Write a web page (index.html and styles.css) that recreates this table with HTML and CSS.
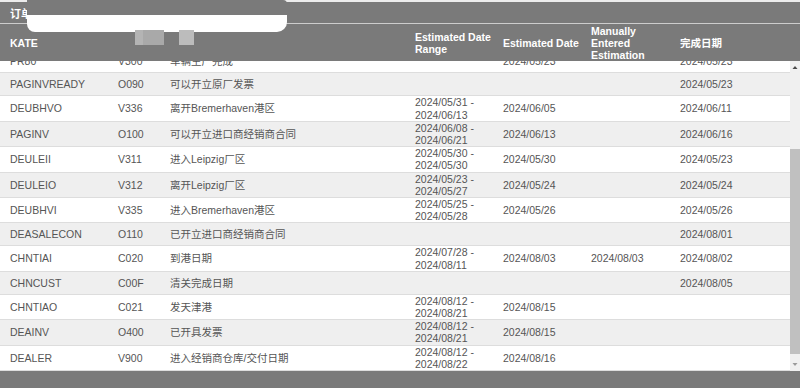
FILE: index.html
```html
<!DOCTYPE html>
<html lang="zh">
<head>
<meta charset="utf-8">
<title>订单状态</title>
<link rel="stylesheet" href="styles.css">
</head>
<body>
<div class="panel">
  <div class="topline"></div>
  <div class="titlebar"><span class="title">订单</span></div>
  <div class="grid head">
    <div>KATE</div>
    <div></div>
    <div></div>
    <div>Estimated Date Range</div>
    <div>Estimated Date</div>
    <div>Manually Entered Estimation</div>
    <div>完成日期</div>
  </div>
  <div class="body">
    <div class="scroller">
      <div class="rows">
        <div class="grid row"><div>PR80</div><div>V300</div><div>车辆生产完成</div><div></div><div>2024/05/23</div><div></div><div>2024/05/23</div></div>
        <div class="grid row"><div>PAGINVREADY</div><div>O090</div><div>可以开立原厂发票</div><div></div><div></div><div></div><div>2024/05/23</div></div>
        <div class="grid row"><div>DEUBHVO</div><div>V336</div><div>离开Bremerhaven港区</div><div>2024/05/31 - 2024/06/13</div><div>2024/06/05</div><div></div><div>2024/06/11</div></div>
        <div class="grid row"><div>PAGINV</div><div>O100</div><div>可以开立进口商经销商合同</div><div>2024/06/08 - 2024/06/21</div><div>2024/06/13</div><div></div><div>2024/06/16</div></div>
        <div class="grid row"><div>DEULEII</div><div>V311</div><div>进入Leipzig厂区</div><div>2024/05/30 - 2024/05/30</div><div>2024/05/30</div><div></div><div>2024/05/23</div></div>
        <div class="grid row"><div>DEULEIO</div><div>V312</div><div>离开Leipzig厂区</div><div>2024/05/23 - 2024/05/27</div><div>2024/05/24</div><div></div><div>2024/05/24</div></div>
        <div class="grid row"><div>DEUBHVI</div><div>V335</div><div>进入Bremerhaven港区</div><div>2024/05/25 - 2024/05/28</div><div>2024/05/26</div><div></div><div>2024/05/26</div></div>
        <div class="grid row"><div>DEASALECON</div><div>O110</div><div>已开立进口商经销商合同</div><div></div><div></div><div></div><div>2024/08/01</div></div>
        <div class="grid row"><div>CHNTIAI</div><div>C020</div><div>到港日期</div><div>2024/07/28 - 2024/08/11</div><div>2024/08/03</div><div>2024/08/03</div><div>2024/08/02</div></div>
        <div class="grid row"><div>CHNCUST</div><div>C00F</div><div>清关完成日期</div><div></div><div></div><div></div><div>2024/08/05</div></div>
        <div class="grid row"><div>CHNTIAO</div><div>C021</div><div>发天津港</div><div>2024/08/12 - 2024/08/21</div><div>2024/08/15</div><div></div><div></div></div>
        <div class="grid row"><div>DEAINV</div><div>O400</div><div>已开具发票</div><div>2024/08/12 - 2024/08/21</div><div>2024/08/15</div><div></div><div></div></div>
        <div class="grid row"><div>DEALER</div><div>V900</div><div>进入经销商仓库/交付日期</div><div>2024/08/12 - 2024/08/22</div><div>2024/08/16</div><div></div><div></div></div>
      </div>
    </div>
    <div class="scrollbar">
      <div class="sb-btn">
        <svg width="10" height="13" viewBox="0 0 10 13"><path d="M2.5 8 H7.5 L5 5 Z" fill="#4a4a4a"/></svg>
      </div>
      <div class="sb-track"><div class="sb-thumb"></div></div>
      <div class="sb-btn">
        <svg width="10" height="13" viewBox="0 0 10 13"><path d="M2.5 5 H7.5 L5 8 Z" fill="#9a9a9a"/></svg>
      </div>
    </div>
  </div>
  <div class="footer"></div>
  <div class="redact"></div>
  <div class="patch patch-a"></div>
  <div class="patch patch-b"></div>
</div>
</body>
</html>
```

FILE: styles.css
```css
html, body {
  margin: 0;
  padding: 0;
  background: #ffffff;
}

body {
  font-family: "Liberation Sans", Arial, "Noto Sans CJK SC", sans-serif;
  font-size: 10.5px;
  color: #555555;
}

.panel {
  position: relative;
  width: 800px;
  height: 388px;
  display: flex;
  flex-direction: column;
  overflow: hidden;
}

.topline {
  height: 2px;
  background: #ececec;
  flex: none;
}

.titlebar {
  flex: none;
  height: 21px;
  background: #7a7a7a;
  border-bottom: 1px solid #cdcdcd;
  display: flex;
  align-items: center;
  padding-left: 10px;
  color: #ffffff;
  font-weight: bold;
  font-size: 11px;
}

.grid {
  display: grid;
  grid-template-columns: 108px 52px 245px 88px 88px 89px 1fr;
  align-items: center;
}

.head {
  flex: none;
  height: 37px;
  background: #7a7a7a;
  color: #ffffff;
  font-weight: bold;
  line-height: 12px;
}

.head > div {
  padding-left: 10px;
}

.body {
  flex: none;
  height: 310px;
  display: flex;
}

.scroller {
  flex: 1;
  min-width: 0;
  overflow: hidden;
  display: flex;
  flex-direction: column-reverse;
}

.rows {
  flex: none;
}

.row {
  min-height: 22px;
  border-bottom: 1px solid #dddddd;
  line-height: 12.2px;
  background: #ffffff;
}

.row:nth-child(even) {
  background: #efefef;
}

.row > div {
  padding-left: 10px;
}

.scrollbar {
  flex: none;
  width: 10px;
  display: flex;
  flex-direction: column;
  background: #f0f0f0;
}

.sb-btn {
  flex: none;
  height: 13px;
  display: flex;
  align-items: center;
  justify-content: center;
}

.sb-btn svg {
  display: block;
}

.sb-track {
  flex: 1;
  display: flex;
  flex-direction: column;
  justify-content: flex-end;
  padding-bottom: 4px;
}

.sb-thumb {
  height: 205px;
  background: #c0c0c0;
}

.footer {
  flex: 1;
  background: #7a7a7a;
}

/* redaction marks present in the original capture */
.redact {
  position: absolute;
  left: 27px;
  top: 0;
  width: 260px;
  height: 32px;
  background: linear-gradient(#7a7a7a 0 15px, #ffffff 15px);
  border-radius: 0 4px 10px 8px;
}

.patch {
  position: absolute;
  top: 30px;
  height: 15px;
}

.patch-a {
  left: 135px;
  width: 29px;
  background: linear-gradient(90deg, #b4b4b4 0 8px, #a9a9a9 8px);
}

.patch-b {
  left: 179px;
  width: 15px;
  background: #bcbcbc;
}
```
